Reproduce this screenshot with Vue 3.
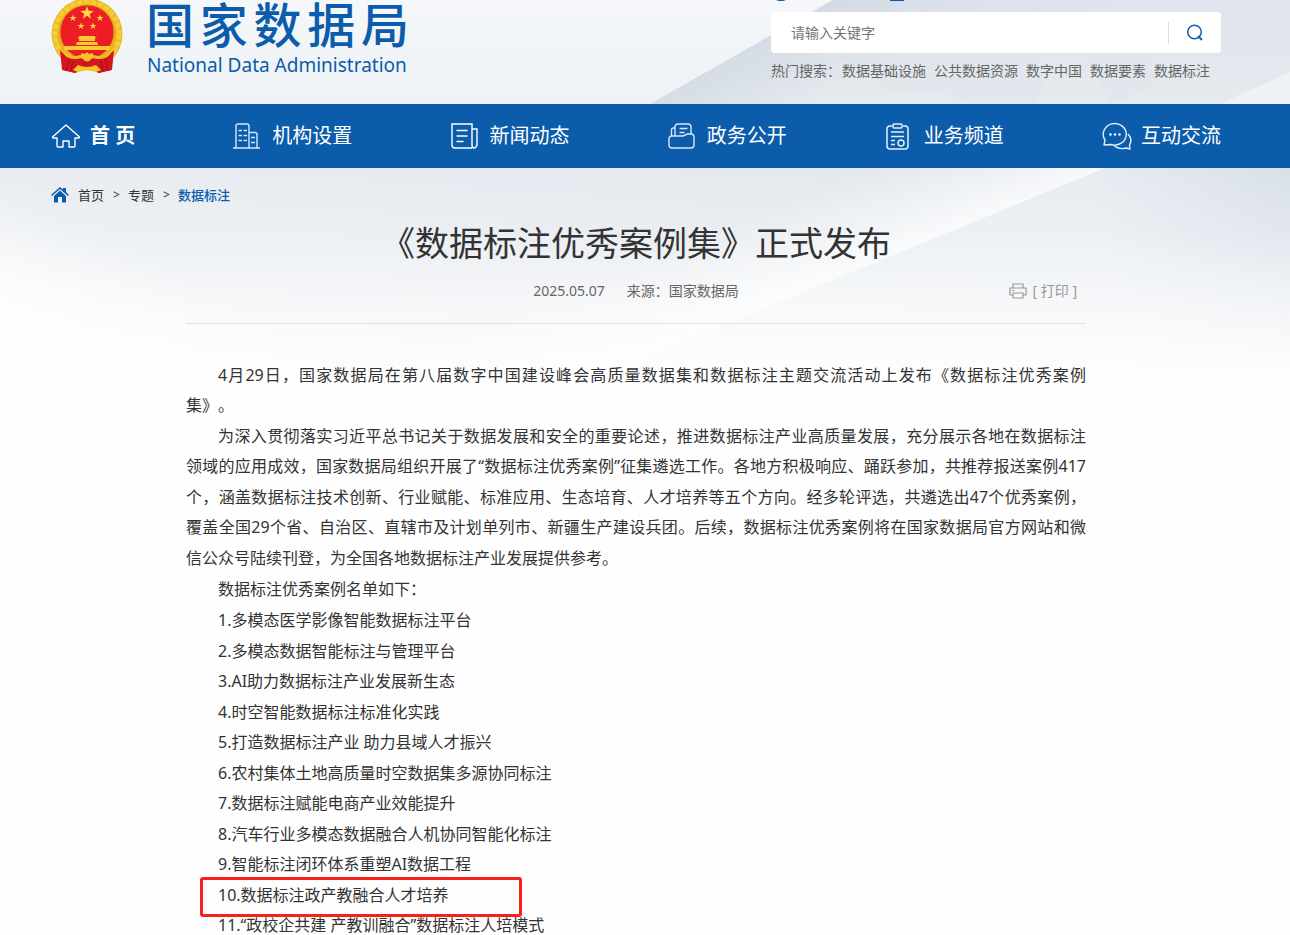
<script setup>
import { ref } from 'vue'

const keyword = ref('')
const hotWords = ['数据基础设施', '公共数据资源', '数字中国', '数据要素', '数据标注']

const intro = [
  '4月29日，国家数据局在第八届数字中国建设峰会高质量数据集和数据标注主题交流活动上发布《数据标注优秀案例',
  '集》。',
]
const body = [
  '为深入贯彻落实习近平总书记关于数据发展和安全的重要论述，推进数据标注产业高质量发展，充分展示各地在数据标注',
  '领域的应用成效，国家数据局组织开展了“数据标注优秀案例”征集遴选工作。各地方积极响应、踊跃参加，共推荐报送案例417',
  '个，涵盖数据标注技术创新、行业赋能、标准应用、生态培育、人才培养等五个方向。经多轮评选，共遴选出47个优秀案例，',
  '覆盖全国29个省、自治区、直辖市及计划单列市、新疆生产建设兵团。后续，数据标注优秀案例将在国家数据局官方网站和微',
  '信公众号陆续刊登，为全国各地数据标注产业发展提供参考。',
]
const cases = [
  '多模态医学影像智能数据标注平台',
  '多模态数据智能标注与管理平台',
  'AI助力数据标注产业发展新生态',
  '时空智能数据标注标准化实践',
  '打造数据标注产业 助力县域人才振兴',
  '农村集体土地高质量时空数据集多源协同标注',
  '数据标注赋能电商产业效能提升',
  '汽车行业多模态数据融合人机协同智能化标注',
  '智能标注闭环体系重塑AI数据工程',
  '数据标注政产教融合人才培养',
  '“政校企共建 产教训融合”数据标注人培模式',
]
const star = '0,-5 1.3,-1.6 5,-1.5 2,0.7 3,4.2 0,2.1 -3,4.2 -2,0.7 -5,-1.5 -1.3,-1.6'
</script>

<template>
  <div class="page">
    <svg class="backdrop" viewBox="0 0 1290 380" preserveAspectRatio="none" aria-hidden="true">
      <defs>
        <linearGradient id="base" x1="0" y1="0" x2="1" y2="0">
          <stop offset="0" stop-color="#e9edf1" />
          <stop offset="0.4" stop-color="#e6eaf0" />
          <stop offset="0.6" stop-color="#e4e9ee" />
          <stop offset="1" stop-color="#dfe4ec" />
        </linearGradient>
        <linearGradient id="head" x1="0" y1="0" x2="0" y2="1">
          <stop offset="0" stop-color="#f5f7fa" />
          <stop offset="1" stop-color="#eef2f5" />
        </linearGradient>
        <linearGradient id="headright" x1="0" y1="0" x2="0" y2="1">
          <stop offset="0" stop-color="#dfe4ed" />
          <stop offset="1" stop-color="#e5eaee" />
        </linearGradient>
        <linearGradient id="edge" gradientUnits="userSpaceOnUse" x1="741" y1="52" x2="781" y2="122">
          <stop offset="0" stop-color="#ccd4df" stop-opacity="0.6" />
          <stop offset="1" stop-color="#ccd4df" stop-opacity="0" />
        </linearGradient>
        <linearGradient id="ray" gradientUnits="userSpaceOnUse" x1="850" y1="273" x2="815" y2="190">
          <stop offset="0" stop-color="#fff" stop-opacity="0.75" />
          <stop offset="0.4" stop-color="#fff" stop-opacity="0.4" />
          <stop offset="1" stop-color="#fff" stop-opacity="0" />
        </linearGradient>
        <linearGradient id="sky" gradientUnits="userSpaceOnUse" x1="1290" y1="168" x2="1110" y2="240">
          <stop offset="0" stop-color="#d3dbe7" stop-opacity="0.5" />
          <stop offset="1" stop-color="#eef2f6" stop-opacity="0.5" />
        </linearGradient>
        <linearGradient id="fade" x1="0" y1="0" x2="0" y2="1">
          <stop offset="0" stop-color="#fefefe" stop-opacity="0" />
          <stop offset="0.3" stop-color="#fefefe" stop-opacity="0.2" />
          <stop offset="0.65" stop-color="#fefefe" stop-opacity="0.65" />
          <stop offset="1" stop-color="#fefefe" />
        </linearGradient>
        <linearGradient id="corner" gradientUnits="userSpaceOnUse" x1="60" y1="350" x2="110" y2="240">
          <stop offset="0" stop-color="#fefefe" />
          <stop offset="1" stop-color="#fefefe" stop-opacity="0" />
        </linearGradient>
        <pattern id="dots" width="3" height="3" patternUnits="userSpaceOnUse" patternTransform="rotate(30)">
          <circle cx="1" cy="1" r="0.800" fill="#cdd5e2" />
        </pattern>
      </defs>
      <rect width="1290" height="380" fill="url(#base)" />
      <rect width="1290" height="104" fill="url(#head)" />
      <path d="M833 0L650 104H1290V0Z" fill="url(#headright)" />
      <path d="M833 0L650 104H1290V0Z" fill="url(#edge)" />
      <path d="M840 56q50-20 105-10l60 10 50 10-20 38-60 0-30-10-60-4Z M880 0h230l-30 12h-160Z M1090 60l50-10 20 34-50 20Z" fill="url(#dots)" opacity="0.6" />
      <path d="M1290 72L1220 104H1290Z" fill="#fff" opacity="0.4" />
      <path d="M1105 168L590 380H1290V168Z" fill="url(#sky)" />
      <path d="M1105 168L590 380H0V168Z" fill="url(#ray)" />
      <rect y="168" width="1290" height="212" fill="url(#fade)" />
      <path d="M0 200V380H500L200 260Z" fill="url(#corner)" />
    </svg>

    <header class="masthead">
      <div class="container masthead-row">
        <a class="brand" href="#" aria-label="国家数据局">
          <svg class="emblem" width="72" height="74" viewBox="0 0 72 74" aria-hidden="true">
            <path d="M14 51L12 70l12 3 4-4h16l4 4 12-3-2-19Z" fill="#d8181f" />
            <circle cx="36" cy="34" r="35.500" fill="#e9b021" />
            <circle cx="36" cy="34" r="32" fill="none" stroke="#f6cc35" stroke-width="5" stroke-dasharray="6 1" />
            <circle cx="36" cy="32" r="27" fill="#ee1c25" stroke="#d99a1c" stroke-width="1" />
            <path d="M9 50l7 7 12-3 8 7 8-7 12 3 7-7-2 20-14 3-5-5H30l-5 5-14-3Z" fill="#d5161e" />
            <path d="M13 46h46v4H13Zm13-4h20l1 3H25Zm2-4h16v3H28Zm-2 0l3-2h14l3 2Z" fill="#f9cc2f" />
            <path d="M11 50q11 8 18 5 7 5 14 0 7 3 18-5-3 10-15 9l-5-1q-5 7-10 0l-5 1q-12 1-15-9Z" fill="#f3bd25" />
            <path d="M29 56l2-3 3 1 2-2 2 2 3-1 2 3-2 3H31ZM27 65q9 4 18 0l5 5-5 2q-9-3-18 0l-5-2Z" fill="#f6c52b" />
            <path d="M18 59l-3 12M54 59l3 12M22 61l-2 10M50 61l2 10" stroke="#9e1016" stroke-width="1" />
            <g fill="#ffd84a">
              <polygon :points="star" transform="translate(36 13) scale(1.350)" />
              <polygon :points="star" transform="translate(22 18) scale(.7)" />
              <polygon :points="star" transform="translate(49 18) scale(.7)" />
              <polygon :points="star" transform="translate(30 26) scale(.7)" />
              <polygon :points="star" transform="translate(42 26) scale(.7)" />
            </g>
          </svg>
          <span class="brand-text">
            <span class="brand-cn">国家数据局</span>
            <span class="brand-en">National Data Administration</span>
          </span>
        </a>
        <div class="search-area">
          <svg class="top-icons" width="150" height="2" viewBox="0 0 150 2" aria-hidden="true">
            <path d="M5 0h10l-3 1H8ZM119 0h14v1h-14Z" fill="#0b5cab" />
          </svg>
          <form class="search" @submit.prevent>
            <input v-model="keyword" type="text" placeholder="请输入关键字" aria-label="请输入关键字" />
            <button type="submit" aria-label="搜索">
              <svg width="18" height="18" viewBox="0 0 18 18" fill="none" stroke="#1560ae" stroke-width="1.500">
                <circle cx="8.500" cy="8" r="6.800" />
                <path d="M12 12l4 4" stroke-width="2" />
              </svg>
            </button>
          </form>
          <div class="hot">
            <span class="hot-label">热门搜索：</span>
            <a v-for="w in hotWords" :key="w" href="#">{{ w }}</a>
          </div>
        </div>
      </div>
    </header>

    <nav class="nav">
      <div class="container nav-row">
        <a class="home" href="#">
          <svg width="30" height="26" viewBox="0 0 30 26" fill="none" stroke="#fff" stroke-width="1.400" stroke-linejoin="round">
            <path d="M15 2L1.500 14q0 1 1 1H6v8q0 1 1 1h5v-6h6v6h5q1 0 1-1v-8h3.500q1 0 1-1Z" />
          </svg>
          <span>首 页</span>
        </a>
        <a href="#">
          <svg width="27" height="26" viewBox="0 0 27 26" fill="none" stroke="#d7e8fa" stroke-width="1.400">
            <path d="M3 25V3q0-2 2-2h9q2 0 2 2v22M16 9.500h6q2 0 2 2V25M0 25h27" />
            <path d="M5.500 7.500h3.500M10.500 7.500h3.500M5.500 12.500h3.500M10.500 12.500h3.500M5.500 17.500h3.500M10.500 17.500h3.500M18 14.500h4M18 19.500h4" />
          </svg>
          <span>机构设置</span>
        </a>
        <a href="#">
          <svg width="27" height="26" viewBox="0 0 27 26" fill="none" stroke="#fff" stroke-width="1.400">
            <path d="M21 25H4q-3 0-3-3V1h20v21q0 3 2 3t3-3V6h-5" />
            <path d="M5.500 7.500h11M5.500 13h11M5.500 18.500h7" />
          </svg>
          <span>新闻动态</span>
        </a>
        <a href="#">
          <svg width="27" height="26" viewBox="0 0 27 26" fill="none" stroke="#d7e8fa" stroke-width="1.400">
            <path d="M3.500 13V7q0-2 2-2H7M7 13V4q0-3 3-3h10q3 0 3 3v7M11.500 5.500h8M11.500 9.500h5" />
            <path d="M4 13h10q2 0 3-1l2-1h4q3 0 3 3v8q0 3-3 3H4q-3 0-3-3v-6q0-3 3-3Z" />
          </svg>
          <span>政务公开</span>
        </a>
        <a href="#">
          <svg width="27" height="28" viewBox="0 0 27 28" fill="none" stroke="#e2effc" stroke-width="1.500">
            <path d="M7 4H5Q2 4 2 7v17q0 3 3 3h15q3 0 3-3V7q0-3-3-3h-2" />
            <rect x="8" y="2" width="9" height="4" rx="1" />
            <path d="M6 10h13M6 14.500h13M6 18.500h4M6 22.500h4" />
            <circle cx="16" cy="21" r="3" />
          </svg>
          <span>业务频道</span>
        </a>
        <a class="chat" href="#">
          <svg width="30" height="28" viewBox="0 0 30 28" fill="none" stroke="#e2effc" stroke-width="1.400" stroke-linejoin="round">
            <path d="M2 23l1-5A11.500 10.800 0 1 1 9 22.500Z" />
            <path d="M26 12q5 5 1.500 11l.5 4-4-1q-7 2-12-2.500" />
            <g fill="#fff" stroke="none"><circle cx="8.500" cy="12.500" r="1.200" /><circle cx="13" cy="12.500" r="1.200" /><circle cx="17.500" cy="12.500" r="1.200" /></g>
          </svg>
          <span>互动交流</span>
        </a>
      </div>
    </nav>

    <main>
      <div class="container crumbs">
        <svg width="18" height="16" viewBox="0 0 18 16" fill="#0b5cab" aria-hidden="true">
          <path d="M9 0l3 2.500V1h3v4l3 3-1 1L9 2 1 9 0 8Z" />
          <path d="M9 3.500L15 9v6.500h-4V10H7v5.500H3V9Z" />
        </svg>
        <a href="#">首页</a><i>&gt;</i><a href="#">专题</a><i>&gt;</i><a class="current" href="#">数据标注</a>
      </div>

      <article class="article">
        <h1>《数据标注优秀案例集》正式发布</h1>
        <div class="meta">
          <span>2025.05.07</span>
          <span>来源：国家数据局</span>
          <button class="print" type="button">
            <svg width="18" height="16" viewBox="0 0 18 16" fill="none" stroke="#999" stroke-width="1.200">
              <path d="M4 5V1h10v4M4 12H1V5h16v7h-3M4 10h10v5H4ZM3 7.500h2" />
            </svg>
            <span>[ 打印 ]</span>
          </button>
        </div>
        <div class="content">
          <p><span v-for="t in intro" :key="t" class="line">{{ t }}</span></p>
          <p><span v-for="t in body" :key="t" class="line">{{ t }}</span></p>
          <p><span class="line">数据标注优秀案例名单如下：</span></p>
          <ol>
            <li v-for="(c, i) in cases" :key="c" :class="{ marked: i === 9 }">{{ i + 1 }}.{{ c }}</li>
          </ol>
        </div>
      </article>
    </main>
  </div>
</template>

<style>
body {
  margin: 0;
  background: #fefefe;
}
</style>

<style scoped>
.page {
  position: relative;
  height: 100vh;
  overflow: hidden;
  font-family: "Noto Sans", "Noto Sans CJK SC", sans-serif;
  text-spacing-trim: space-all;
  color: #333;
}
.backdrop {
  position: absolute;
  top: 0;
  left: 0;
  width: 100%;
  height: 380px;
}
a {
  color: inherit;
  text-decoration: none;
}
.masthead,
.nav,
main {
  position: relative;
  padding-right: 18px;
}
.container {
  max-width: 1170px;
  margin: 0 auto;
}
.masthead-row {
  display: flex;
  justify-content: space-between;
  min-height: 104px;
}
.brand {
  display: flex;
  gap: 23px;
  color: #0b5cab;
}
.brand-text {
  display: flex;
  flex-direction: column;
  width: 263px;
}
.brand-cn {
  font-size: 48px;
  font-weight: 500;
  line-height: 50px;
  text-align-last: justify;
}
.brand-en {
  padding: 2px 0 0 1px;
  font-family: "Noto Sans", sans-serif;
  font-size: 19px;
  line-height: 26px;
  white-space: nowrap;
}
.search-area {
  position: relative;
  width: 450px;
  padding-top: 12px;
}
.top-icons {
  position: absolute;
  top: 0;
  left: 0;
}
.search {
  display: flex;
  align-items: center;
  height: 41px;
  background: #fff;
  border-radius: 4px;
}
.search input {
  flex: 1;
  padding: 0 0 0 20px;
  border: 0;
  outline: 0;
  background: none;
  font: inherit;
  font-size: 14px;
}
.search input::placeholder {
  color: #757575;
}
.search button {
  display: flex;
  align-items: center;
  justify-content: center;
  width: 53px;
  height: 22px;
  padding: 0;
  border: 0;
  border-left: 1px solid #ddd;
  background: none;
}
.hot {
  display: flex;
  gap: 8px;
  padding-top: 8px;
  font-size: 14px;
  line-height: 20px;
  color: #666;
  white-space: nowrap;
}
.hot-label {
  width: 63px;
}
.nav {
  background: #0b5cab;
  color: #fff;
}
.nav-row {
  display: flex;
  align-items: center;
  justify-content: space-between;
  height: 64px;
}
.nav a {
  display: flex;
  align-items: center;
  gap: 12px;
  font-size: 20px;
  line-height: 28px;
}
.nav .home {
  gap: 9px;
  font-weight: 700;
}
.nav .chat {
  gap: 9px;
}
.crumbs {
  display: flex;
  align-items: center;
  gap: 9px;
  height: 53px;
  font-size: 13px;
}
.crumbs i {
  width: 6px;
  font-style: normal;
  font-size: 12px;
}
.crumbs .current {
  color: #0b5cab;
  font-weight: 500;
}
.article {
  max-width: 900px;
  margin: 0 auto;
}
h1 {
  margin: 0;
  font-size: 34px;
  font-weight: 400;
  line-height: 44px;
  text-align: center;
}
.meta {
  position: relative;
  display: flex;
  justify-content: center;
  gap: 22px;
  padding: 16px 0 22px;
  border-bottom: 1px solid #dfe2e5;
  font-size: 14px;
  line-height: 20px;
  color: #666;
}
.print {
  position: absolute;
  top: 16px;
  right: 9px;
  display: flex;
  align-items: center;
  gap: 6px;
  padding: 0;
  border: 0;
  background: none;
  font: inherit;
  color: #999;
}
.content {
  padding-top: 36px;
  font-size: 16px;
  line-height: 30px;
  white-space: nowrap;
}
p,
ol {
  margin: 0;
  padding: 0;
  list-style: none;
}
p {
  margin-bottom: 1px;
}
.line {
  display: block;
  text-align-last: justify;
}
.line:last-child {
  text-align-last: left;
}
.line:first-child {
  padding-left: 32px;
}
.line:nth-child(even):not(:last-child) {
  margin-bottom: 1px;
}
li {
  position: relative;
  padding-left: 32px;
}
li:nth-child(odd) {
  margin-bottom: 1px;
}
.marked::after {
  content: "";
  position: absolute;
  top: -3px;
  left: 14px;
  width: 316px;
  height: 34px;
  border: 3px solid #f8201a;
  border-radius: 3px;
}
</style>
